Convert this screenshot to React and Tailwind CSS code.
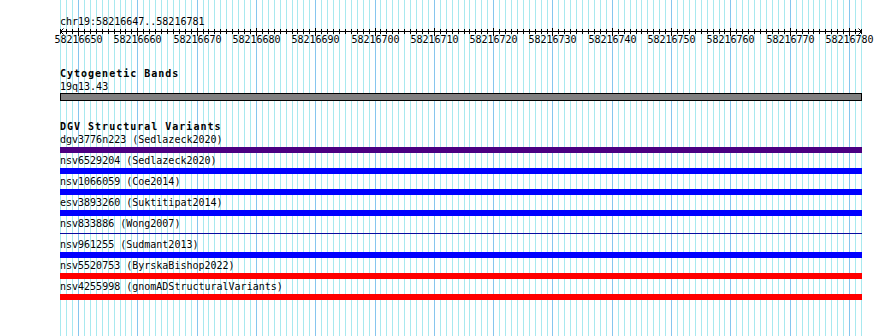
const START = 58216647;
const PX_PER_BP = 5.931;
const X0 = 60.2;

const ticks = Array.from({ length: 136 }, (_, i) => ({
  bp: START + i,
  x: Math.round(X0 + i * PX_PER_BP) + 0.5,
  major: (START + i) % 10 === 0,
}));

const variants = [
  { name: "dgv3776n223 (Sedlazeck2020)", bar: "bg-[#4b0082]" },
  { name: "nsv6529204 (Sedlazeck2020)", bar: "bg-[#0000ff]" },
  { name: "nsv1066059 (Coe2014)", bar: "bg-[#0000ff]" },
  { name: "esv3893260 (Suktitipat2014)", bar: "bg-[#0000ff]" },
  { name: "nsv833886 (Wong2007)", thin: true },
  { name: "nsv961255 (Sudmant2013)", bar: "bg-[#0000ff]" },
  { name: "nsv5520753 (ByrskaBishop2022)", bar: "bg-[#ff0000]" },
  { name: "nsv4255998 (gnomADStructuralVariants)", bar: "bg-[#ff0000]" },
];

const mono = "font-['DejaVu_Sans_Mono',monospace]";

const Grid = () => (
  <svg
    className="absolute inset-0 pointer-events-none"
    width="890"
    height="336"
    shapeRendering="crispEdges"
  >
    {ticks.map((t) => (
      <line
        key={t.bp}
        x1={t.x}
        x2={t.x}
        y1="0"
        y2="336"
        stroke={t.major ? "#86c6ee" : "#a8e9ef"}
        strokeWidth="1"
      />
    ))}
  </svg>
);

const Ruler = () => (
  <svg width="890" height="20" className="block -ml-[60px]">
    <g shapeRendering="crispEdges" stroke="#000" strokeWidth="1">
      <line x1="60" x2="862" y1="3.5" y2="3.5" />
      {ticks.map((t) => (
        <line
          key={t.bp}
          x1={t.x}
          x2={t.x}
          y1={t.major ? 0 : 1}
          y2={t.major ? 8 : 6}
        />
      ))}
    </g>
    <path d="M63.5 0.5 L60.5 3.5 L63.5 6.5" fill="none" stroke="#000" />
    <path d="M858.5 0.5 L861.5 3.5 L858.5 6.5" fill="none" stroke="#000" />
    {ticks
      .filter((t) => t.major)
      .map((t) => (
        <text
          key={t.bp}
          x={t.x}
          y="15"
          textAnchor="middle"
          fontFamily="DejaVu Sans Mono, monospace"
          fontSize="10"
          fill="#000"
        >
          {t.bp}
        </text>
      ))}
  </svg>
);

const Label = ({ children, bold }) => (
  <div
    className={`h-[13px] text-[10px] leading-[13px] text-black whitespace-nowrap ${mono} ${
      bold ? "font-bold tracking-[1px]" : ""
    }`}
  >
    {children}
  </div>
);

export default function App() {
  return (
    <div className="relative w-[890px] h-[336px] bg-white overflow-hidden">
      <Grid />
      <div className="relative flex flex-col pl-[60px] w-[862px] pt-[15px]">
        <Label>chr19:58216647..58216781</Label>
        <Ruler />

        <div className="mt-[19px]">
          <Label bold>Cytogenetic Bands</Label>
          <Label>19q13.43</Label>
          <div className="h-[8px] bg-[#808080] border border-black" />
        </div>

        <div className="mt-[19px]">
          <Label bold>DGV Structural Variants</Label>
          {variants.map((v) => (
            <div key={v.name} className="flex flex-col">
              <Label>{v.name}</Label>
              {v.thin ? (
                <div className="mt-px h-[6px] flex flex-col pt-[2px]">
                  <div className="h-px bg-[#0a0aa0]" />
                </div>
              ) : (
                <div className={`mt-px h-[6px] ${v.bar}`} />
              )}
              <div className="h-px" />
            </div>
          ))}
        </div>
      </div>
    </div>
  );
}
